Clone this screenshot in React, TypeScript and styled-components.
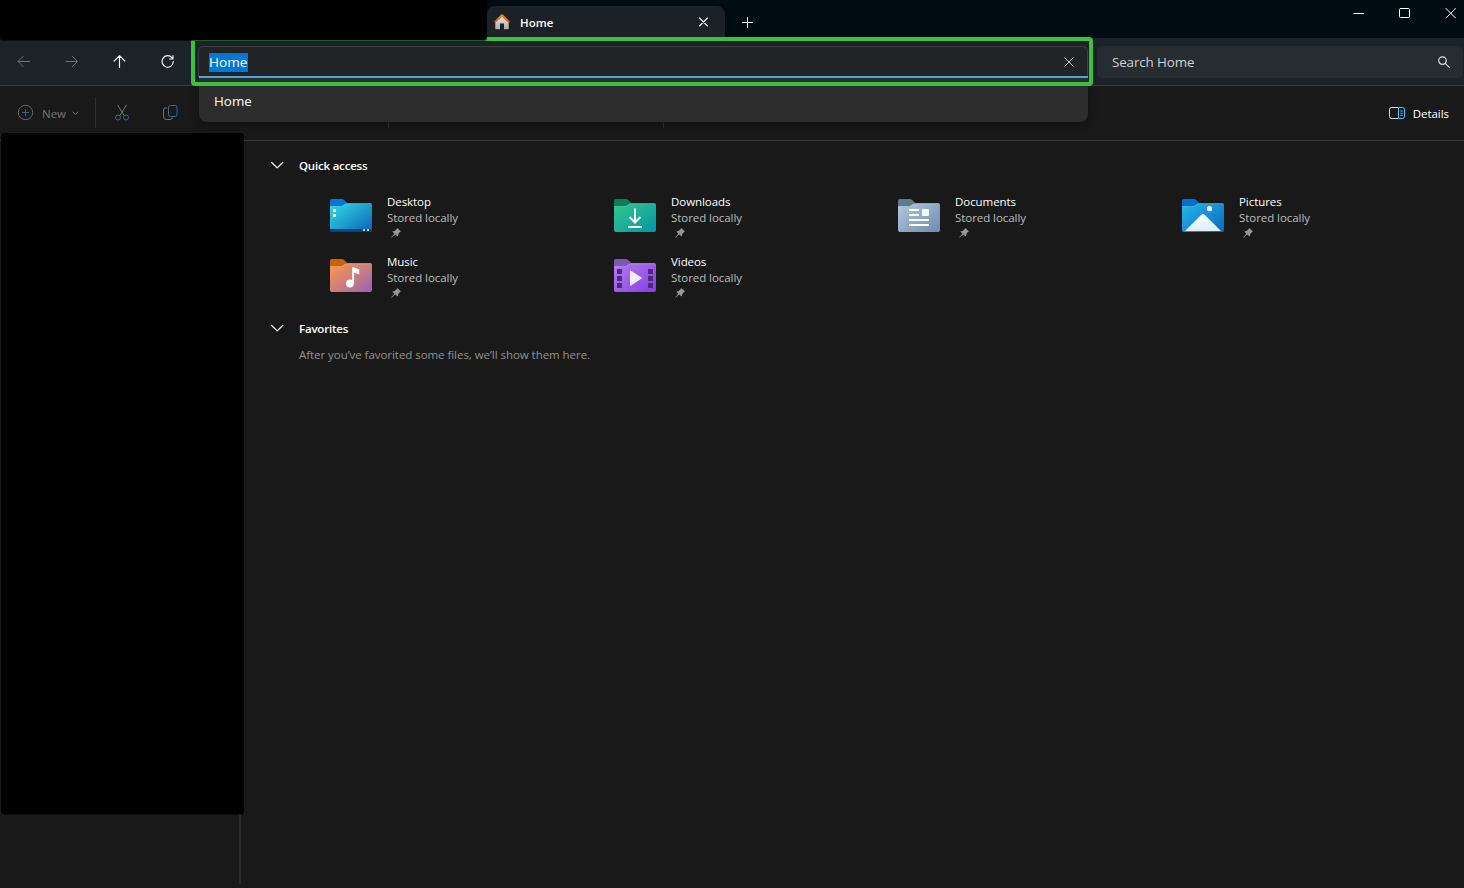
import React from "react";
import styled, { createGlobalStyle } from "styled-components";

const GlobalStyle = createGlobalStyle`
  * { box-sizing: border-box; }
  body {
    margin: 0;
    overflow: hidden;
    background: #191919;
    font-family: "Open Sans", "Noto Sans", sans-serif;
    font-size: 11.5px;
    color: #fff;
  }
  svg { display: block; flex: none; }
`;

const Window = styled.div`
  position: relative;
  width: 1464px;
  height: 888px;
  display: flex;
  flex-direction: column;
  background: #191919;
`;

const TitleBar = styled.header`
  height: 38px;
  display: flex;
  padding-left: 487px;
  background: #000c14;
`;

const Tab = styled.div`
  width: 238px;
  height: 32px;
  margin-top: 6px;
  padding: 0 16px 0 7px;
  display: flex;
  align-items: center;
  background: #1b2126;
  border-radius: 8px 8px 0 0;
`;

const TabTitle = styled.span`
  flex: 1;
  padding: 2px 0 0 10px;
  font-weight: 600;
  line-height: 16px;
`;

const NewTab = styled.div`
  padding: 17px 0 0 17px;
`;

const WindowControls = styled.div`
  display: flex;
  gap: 35px;
  margin-left: auto;
  padding: 8px 8px 0 0;
`;

const NavBar = styled.nav`
  height: 48px;
  display: flex;
  align-items: center;
  background: #1b2228;
  border-bottom: 1px solid #3b3e40;
`;

const NavButton = styled.div`
  width: 48px;
  padding-right: 1px;
  display: flex;
  justify-content: center;
`;

const AddressWrap = styled.div`
  position: relative;
  width: 890px;
  height: 32px;
  margin-left: 6px;
`;

const AddressBox = styled.div`
  height: 31px;
  display: flex;
  align-items: center;
  justify-content: space-between;
  padding: 1px 13px 0 10px;
  background: #222325;
  border: 1px solid #3c4045;
  border-bottom: 0;
  border-radius: 5px 5px 0 0;
`;

const FocusLine = styled.div`
  height: 2px;
  margin: -1px 0 0 1px;
  background: #4bafed;
`;

const Selected = styled.span`
  height: 19px;
  line-height: 19px;
  font-size: 13.5px;
  letter-spacing: 0.1px;
  background: #0078d7;
`;

const Suggestions = styled.div`
  position: absolute;
  z-index: 1;
  left: 1px;
  top: 32px;
  width: 889px;
  height: 44px;
  padding: 13px 15px;
  background: #2d2d2d;
  border-radius: 0 0 8px 8px;
  box-shadow: 0 4px 10px rgba(0, 0, 0, 0.35);
  font-size: 13.4px;
  line-height: 20px;
`;

const Highlight = styled.div`
  position: absolute;
  z-index: 2;
  left: -7px;
  top: -9px;
  width: 902px;
  height: 49px;
  border: 4px solid #3cc13f;
  border-radius: 4px;
`;

const SearchBox = styled.div`
  width: 366px;
  height: 32px;
  margin-left: 9px;
  padding: 0 13px 0 15px;
  display: flex;
  align-items: center;
  justify-content: space-between;
  border-radius: 5px;
  background: #262c30;
  color: #cfd1d2;
  font-size: 13.4px;
  letter-spacing: -0.12px;
`;

const CommandBar = styled.div`
  height: 55px;
  display: flex;
  align-items: center;
  padding-bottom: 1px;
  border-bottom: 1px solid #3a3a3a;
`;

const NewButton = styled.div`
  width: 95px;
  padding-left: 17px;
  display: flex;
  align-items: center;
  color: #777;
  span { padding: 2px 6px 0 8px; }
  svg:last-child { margin-top: 2px; }
`;

const Divider = styled.div<{ $gap?: number }>`
  width: 1px;
  height: 31px;
  margin-left: ${(p) => p.$gap ?? 0}px;
  background: #303030;
`;

const IconSlot = styled.div<{ $before: number }>`
  margin-left: ${(p) => p.$before}px;
`;

const DetailsButton = styled.div`
  margin-left: auto;
  padding: 1px 15px 0 0;
  display: flex;
  align-items: center;
  gap: 8px;
  letter-spacing: -0.05px;
`;

const Body = styled.div`
  flex: 1;
  min-height: 0;
  display: flex;
`;

const Sidebar = styled.aside`
  flex: none;
  width: 241px;
  height: 743px;
  border-right: 2px solid #2b2b2b;
`;

const Main = styled.main`
  flex: 1;
  min-width: 0;
  padding: 14px 0 0 30px;
`;

const SectionHead = styled.div`
  display: flex;
  align-items: center;
  height: 20px;
  gap: 15px;
  font-weight: 600;
  letter-spacing: -0.2px;
`;

const Grid = styled.div`
  display: grid;
  grid-template-columns: repeat(4, 284px);
  grid-auto-rows: 60px;
  padding: 19px 0 0 59px;
  height: 143px;
`;

const Tile = styled.div`
  display: flex;
  gap: 15px;
  svg.folder { margin-top: 5px; }
`;

const TileText = styled.div`
  display: flex;
  flex-direction: column;
  line-height: 16px;
  letter-spacing: -0.06px;
  height: 48px;
`;

const Location = styled.span`
  color: #bdbdbd;
`;

const Empty = styled.p`
  margin: 8px 0 0 28px;
  line-height: 18px;
  letter-spacing: -0.05px;
  color: #929292;
`;

const Mask = styled.div<{ $x: number; $y: number; $w: number; $h: number }>`
  position: absolute;
  z-index: 3;
  left: ${(p) => p.$x}px;
  top: ${(p) => p.$y}px;
  width: ${(p) => p.$w}px;
  height: ${(p) => p.$h}px;
  background: #000;
  border-radius: 3px;
  box-shadow: 0 1px 0 rgba(0, 0, 0, 0.5);
`;

type LineProps = { w: number; h: number; d: string; color?: string; stroke?: number };
const Line = ({ w, h, d, color = "#f4f4f4", stroke = 1 }: LineProps) => (
  <svg width={w} height={h} viewBox={`0 0 ${w} ${h}`} fill="none" stroke={color} strokeWidth={stroke} strokeLinecap="round" strokeLinejoin="round">
    <path d={d} />
  </svg>
);

const Chevron = () => <Line w={13} h={8} d="M.7 1.500 6.200 6.900 11.700 1.500" stroke={1.300} />;

const HouseIcon = () => (
  <svg width="16" height="16" viewBox="0 0 16 16">
    <defs>
      <linearGradient id="wall" x2="0" y2="1"><stop stopColor="#e8e8e8" /><stop offset="1" stopColor="#aaa" /></linearGradient>
      <linearGradient id="roof" x2="0" y2="1"><stop stopColor="#f79316" /><stop offset="1" stopColor="#d9430c" /></linearGradient>
    </defs>
    <path d="M1.300 7 8 1.800 14.700 7v7.400q0 .9-.9.900H10V9.500H6v5.800H2.200q-.9 0-.9-.9Z" fill="url(#wall)" />
    <path d="M.1 8.100Q0 7.400.5 6.900L7 .8q1-.9 2 0l6.500 6.100q.5.5.4 1.200l-1 .8L8 2.900 1 8.900Z" fill="url(#roof)" />
  </svg>
);

type FolderKind = "desktop" | "downloads" | "documents" | "pictures" | "music" | "videos";
const folderColors: Record<FolderKind, [string, string, string]> = {
  desktop: ["#0078d4", "#33d6e2", "#0962b7"],
  downloads: ["#087f5b", "#32c68d", "#0495a5"],
  documents: ["#5c7e8c", "#b0c4dc", "#6c8cae"],
  pictures: ["#0073cf", "#25b2ea", "#0868bd"],
  music: ["#c8630c", "#ff944d", "#9564b4"],
  videos: ["#7d58b5", "#b477f2", "#8340dc"],
};

const FolderArt = ({ kind }: { kind: FolderKind }) => {
  switch (kind) {
    case "desktop":
      return (
        <>
          <path d="M0 30h42v1.500q0 1.500-1.500 1.500h-39Q0 33 0 31.500Z" fill="#07457d" />
          <path d="M3 10h3v3H3zM3 15h3v3H3z" fill="#f3ffff" />
          <path d="M33 30h2v2h-2zM37 30h2v2h-2z" fill="#b7d5eb" />
        </>
      );
    case "downloads":
      return <path d="M21 9.500v14M15.500 18 21 23.500l5.500-5.500M14 28h14" fill="none" stroke="#fff" strokeWidth="2" />;
    case "documents":
      return (
        <>
          <path d="M11 11h10M11 16h10M11 21h20M11 26h20" stroke="#fff" strokeWidth="2" />
          <rect x="24" y="10" width="7" height="7" rx="1.200" fill="#fff" />
        </>
      );
    case "pictures":
      return (
        <>
          <path d="M3 32 19.300 15.800q1.700-1.600 3.400 0L39 32Z" fill="url(#snow)" />
          <circle cx="27.500" cy="9.700" r="2.600" fill="#fff" />
        </>
      );
    case "music":
      return (
        <>
          <path d="M22.200 8.600q0-.8.8-.5l6.300 2.500v5l-5.200-2V24.500h-1.900Z" fill="#fff" />
          <circle cx="19.900" cy="24.500" r="3.900" fill="#fff" />
        </>
      );
    case "videos":
      return (
        <>
          <path d="M3 10h5v5H3zM3 17h5v5H3zM3 24h5v5H3zM34 10h5v5h-5zM34 17h5v5h-5zM34 24h5v5h-5z" fill="#4a2c7c" />
          <path d="M16 12.200q0-1.100 1-.5l10.500 6.800q.8.600 0 1.100L17 26.500q-1 .6-1-.5Z" fill="#f1edf7" />
        </>
      );
  }
};

const Folder = ({ kind }: { kind: FolderKind }) => {
  const [back, from, to] = folderColors[kind];
  return (
    <svg className="folder" width="42" height="33" viewBox="0 0 42 33">
      <defs>
        <linearGradient id={kind} x1="0" y1="0.1" x2="1" y2="1"><stop stopColor={from} /><stop offset="1" stopColor={to} /></linearGradient>
        <linearGradient id="snow" x2="0" y2="1"><stop stopColor="#fff" /><stop offset="1" stopColor="#dbeefa" /></linearGradient>
      </defs>
      <path d="M0 1.800Q0 0 1.800 0h10.100q1.300 0 2.200.9L17.300 4h23.200Q42 4 42 5.500V20H0Z" fill={back} />
      <path d="M0 7.300h10.500q1.500 0 2.700-.9l2-1.300q1-.6 2.300-.6h23Q42 4.500 42 6v25.300Q42 33 40.300 33H1.700Q0 33 0 31.300Z" fill={`url(#${kind})`} />
      <path d="M.3 7.600h10.200q1.500 0 2.700-.9l2-1.300q1-.6 2.300-.6h23.500" fill="none" stroke="#fff" strokeOpacity=".25" strokeWidth=".7" />
      <FolderArt kind={kind} />
    </svg>
  );
};

const PinWrap = styled.span`
  height: 16px;
  padding: 2px 0 0 4px;
`;

const Pin = () => (
  <PinWrap>
    <svg width="10" height="10" viewBox="0 0 11 11" fill="#979797">
      <path d="M6.600.5q.4-.5.9 0l2.900 2.900q.5.5 0 .9l-.9.500L8 6.900l-.3 1.900q-.2.700-.7.200L4.600 7.100.8 10.400l-.6.200.2-.6L3.800 6.300 1.900 4.400q-.5-.5.200-.7l1.900-.4L6.100 1.300Z" />
    </svg>
  </PinWrap>
);

const places: { name: string; kind: FolderKind }[] = [
  { name: "Desktop", kind: "desktop" },
  { name: "Downloads", kind: "downloads" },
  { name: "Documents", kind: "documents" },
  { name: "Pictures", kind: "pictures" },
  { name: "Music", kind: "music" },
  { name: "Videos", kind: "videos" },
];

export default function App() {
  return (
    <>
      <GlobalStyle />
      <Window>
        <TitleBar>
          <Tab>
            <HouseIcon />
            <TabTitle>Home</TabTitle>
            <Line w={11} h={11} d="M1.500 1l8 8M9.500 1l-8 8" stroke={1.100} />
          </Tab>
          <NewTab><Line w={11} h={11} d="M.5 5.500h10M5.500.5v10" /></NewTab>
          <WindowControls>
            <Line w={11} h={11} d="M1 5.500h9.500" color="#fff" />
            <Line w={11} h={11} d="M1.500.5h8q1 0 1 1v7q0 1-1 1h-8q-1 0-1-1v-7q0-1 1-1Z" color="#fff" />
            <Line w={11} h={11} d="M1 .5l9.500 9.500M10.500.5L1 10" color="#fff" />
          </WindowControls>
        </TitleBar>

        <NavBar>
          <NavButton><Line w={13} h={13} d="M12.500 6.500H1.300M6.300 1.200 1 6.500l5.300 5.300" color="#6d7377" /></NavButton>
          <NavButton><Line w={13} h={13} d="M1 6.500h11.400M7.200 1.200l5.300 5.300-5.300 5.300" color="#6d7377" /></NavButton>
          <NavButton><Line w={13} h={13} d="M6.500 12.500V.8M1.200 6 6.500.7 11.800 6" stroke={1.200} /></NavButton>
          <NavButton><Line w={13} h={13} d="M12.300 6.500A5.600 5.800 0 1 1 10.900 2.600L12 3.900M12 .7v3.300H8.500" stroke={1.200} /></NavButton>
          <AddressWrap>
            <AddressBox>
              <Selected>Home</Selected>
              <Line w={10} h={10} d="M.8.8l8.400 8.400M9.200.8.8 9.200" color="#c5c5c5" />
            </AddressBox>
            <FocusLine />
            <Suggestions>Home</Suggestions>
            <Highlight />
          </AddressWrap>
          <SearchBox>
            <span>Search Home</span>
            <Line w={12} h={12} d="M8.300 4.600a3.800 3.800 0 1 1-7.600 0 3.800 3.800 0 0 1 7.600 0M7.300 7.300l4 4" color="#dedede" stroke={1.200} />
          </SearchBox>
        </NavBar>

        <CommandBar>
          <NewButton>
            <svg width="17" height="17" viewBox="0 0 17 17" fill="none">
              <circle cx="8.500" cy="8.500" r="7.200" stroke="#686868" />
              <path d="M5 8.500h7M8.500 5v7" stroke="#2d6785" />
            </svg>
            <span>New</span>
            <Line w={7} h={5} d="M1 1l2.500 2.500L6 1" color="#777" />
          </NewButton>
          <Divider />
          <IconSlot $before={19}>
            <svg width="14" height="17" viewBox="0 0 14 17" fill="none">
              <path d="M2.500.8 9 11.500M11.500.8 5 11.500" stroke="#777" />
              <circle cx="3" cy="13.500" r="2.500" stroke="#2f6f92" />
              <circle cx="11" cy="13.500" r="2.500" stroke="#2f6f92" />
            </svg>
          </IconSlot>
          <IconSlot $before={34}>
            <svg width="15" height="15" viewBox="0 0 15 15" fill="none">
              <path d="M4 3H2.500Q.5 3 .5 5v6.500q0 3 3 3H7q2 0 2.300-2" stroke="#777" />
              <rect x="5.500" y=".5" width="8.500" height="11" rx="2" stroke="#2f6f92" />
            </svg>
          </IconSlot>
          <Divider $gap={210} />
          <Divider $gap={274} />
          <DetailsButton>
            <svg width="16" height="12" viewBox="0 0 16 12" fill="none">
              <path d="M9 .5H2.500q-2 0-2 2v7q0 2 2 2H9" stroke="#ddd" />
              <path d="M9.500.5h4q2 0 2 2v7q0 2-2 2h-4ZM11.300 4h2.500M11.300 6.200h2.500M11.300 8.400h2.500" stroke="#4cc2ff" />
            </svg>
            <span>Details</span>
          </DetailsButton>
        </CommandBar>

        <Body>
          <Sidebar />
          <Main>
            <SectionHead><Chevron /><span>Quick access</span></SectionHead>
            <Grid>
              {places.map((p) => (
                <Tile key={p.name}>
                  <Folder kind={p.kind} />
                  <TileText>
                    <span>{p.name}</span>
                    <Location>Stored locally</Location>
                    <Pin />
                  </TileText>
                </Tile>
              ))}
            </Grid>
            <SectionHead><Chevron /><span>Favorites</span></SectionHead>
            <Empty>After you’ve favorited some files, we’ll show them here.</Empty>
          </Main>
        </Body>

        <Mask $x={0} $y={0} $w={487} $h={40} />
        <Mask $x={1} $y={133} $w={243} $h={681} />
      </Window>
    </>
  );
}
